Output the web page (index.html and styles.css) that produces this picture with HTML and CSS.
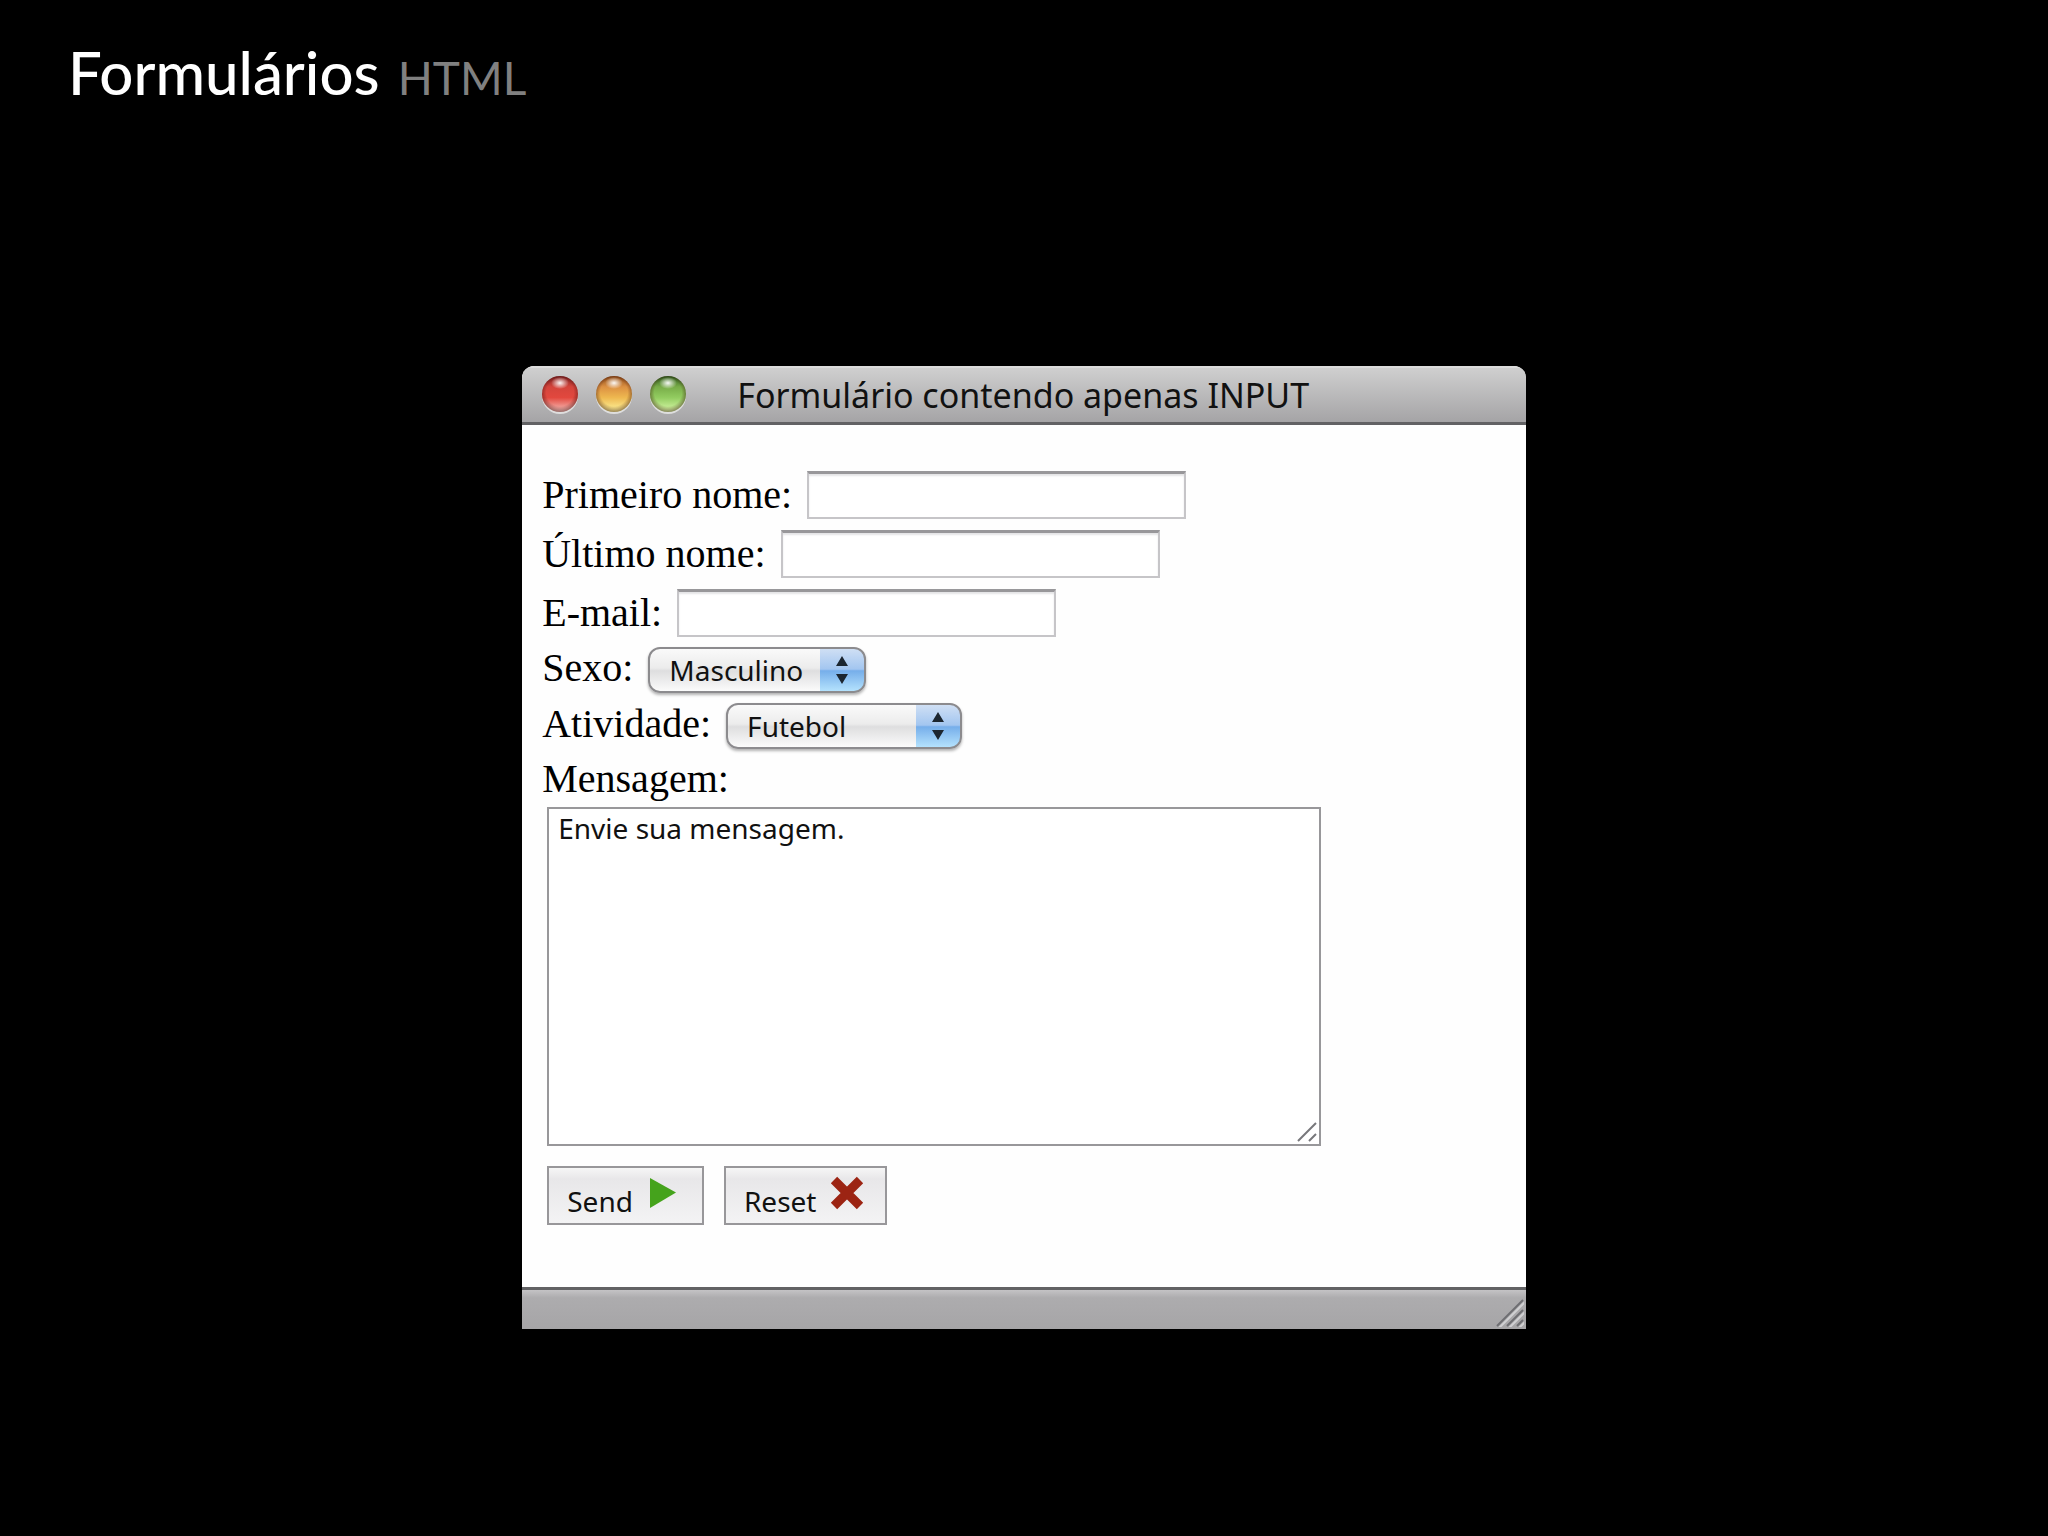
FILE: index.html
```
<!DOCTYPE html>
<html lang="pt-BR">

<head>
  <meta charset="UTF-8">
  <meta name="viewport" content="width=device-width, initial-scale=1.0">
  <title>Formulários HTML</title>
  <link rel="stylesheet" href="styles.css">
</head>

<body>
  <header class="slide-header">
    <h1>Formulários <span class="topic">HTML</span></h1>
  </header>

  <main class="window">
    <div class="titlebar">
      <div class="lights">
        <svg class="light" viewBox="0 0 38 40" aria-hidden="true">
          <defs>
            <linearGradient id="red" x1="0" y1="0" x2="0" y2="1">
              <stop offset="0" stop-color="#7d2020" />
              <stop offset=".3" stop-color="#d4443c" />
              <stop offset=".6" stop-color="#e2483e" />
              <stop offset="1" stop-color="#f8c8c2" />
            </linearGradient>
            <linearGradient id="yellow" x1="0" y1="0" x2="0" y2="1">
              <stop offset="0" stop-color="#8c4a18" />
              <stop offset=".3" stop-color="#dc9042" />
              <stop offset=".6" stop-color="#eeb850" />
              <stop offset="1" stop-color="#fff8a0" />
            </linearGradient>
            <linearGradient id="green" x1="0" y1="0" x2="0" y2="1">
              <stop offset="0" stop-color="#2f5a1c" />
              <stop offset=".3" stop-color="#78ac48" />
              <stop offset=".6" stop-color="#92cc60" />
              <stop offset="1" stop-color="#dcfbac" />
            </linearGradient>
            <radialGradient id="rim" cy=".46" r=".54">
              <stop offset=".7" stop-color="#300" stop-opacity="0" />
              <stop offset="1" stop-color="#200" stop-opacity=".45" />
            </radialGradient>
            <radialGradient id="shine">
              <stop offset="0" stop-color="#fff" stop-opacity=".95" />
              <stop offset="1" stop-color="#fff" stop-opacity="0" />
            </radialGradient>
          </defs>
          <circle cx="19" cy="21" r="18" fill="#dedede" />
          <circle cx="19" cy="19" r="18" fill="url(#red)" />
          <circle cx="19" cy="19" r="18" fill="url(#rim)" />
          <ellipse cx="19" cy="8" rx="9" ry="6" fill="url(#shine)" />
        </svg>
        <svg class="light" viewBox="0 0 38 40" aria-hidden="true">
          <circle cx="19" cy="21" r="18" fill="#dedede" />
          <circle cx="19" cy="19" r="18" fill="url(#yellow)" />
          <circle cx="19" cy="19" r="18" fill="url(#rim)" />
          <ellipse cx="19" cy="8" rx="9" ry="6" fill="url(#shine)" />
        </svg>
        <svg class="light" viewBox="0 0 38 40" aria-hidden="true">
          <circle cx="19" cy="21" r="18" fill="#dedede" />
          <circle cx="19" cy="19" r="18" fill="url(#green)" />
          <circle cx="19" cy="19" r="18" fill="url(#rim)" />
          <ellipse cx="19" cy="8" rx="9" ry="6" fill="url(#shine)" />
        </svg>
      </div>
      <h2>Formulário contendo apenas INPUT</h2>
    </div>

    <form class="form">
      <div class="row">
        <label for="nome">Primeiro nome:</label>
        <input type="text" id="nome" name="nome">
      </div>
      <div class="row">
        <label for="sobrenome">Último nome:</label>
        <input type="text" id="sobrenome" name="sobrenome">
      </div>
      <div class="row">
        <label for="email">E-mail:</label>
        <input type="email" id="email" name="email">
      </div>
      <div class="row row-select">
        <label for="sexo">Sexo:</label>
        <div class="select">
          <select id="sexo" name="sexo">
            <option>Masculino</option>
            <option>Feminino</option>
          </select>
          <svg class="arrows" viewBox="0 0 12 28" aria-hidden="true">
            <path d="M6 0l6 10H0zM6 28L0 18h12z" fill="#1c2630" />
          </svg>
        </div>
      </div>
      <div class="row row-select">
        <label for="atividade">Atividade:</label>
        <div class="select select-wide">
          <select id="atividade" name="atividade">
            <option>Futebol</option>
            <option>Natação</option>
            <option>Voleibol</option>
          </select>
          <svg class="arrows" viewBox="0 0 12 28" aria-hidden="true">
            <path d="M6 0l6 10H0zM6 28L0 18h12z" fill="#1c2630" />
          </svg>
        </div>
      </div>
      <label class="message-label" for="mensagem">Mensagem:</label>
      <div class="message">
        <textarea id="mensagem" name="mensagem">Envie sua mensagem.</textarea>
        <svg class="grip" viewBox="0 0 20 20" aria-hidden="true">
          <path d="M1 19L19 1M12 19l7-7" stroke="#77777b" stroke-width="2" />
        </svg>
      </div>
      <div class="buttons">
        <button type="submit">Send
          <svg viewBox="0 0 38 44" aria-hidden="true">
            <path d="M4 2l26 14.500L4 32z" fill="#45a31c" />
          </svg>
        </button>
        <button type="reset">Reset
          <svg viewBox="0 0 38 44" aria-hidden="true">
            <path d="M5 4l26 26M31 4L5 30" stroke="#9c2413" stroke-width="9" />
          </svg>
        </button>
      </div>
    </form>

    <div class="statusbar">
      <svg viewBox="0 0 28 28" aria-hidden="true">
        <path d="M3 29L29 3M13 29l16-16M23 29l6-6" stroke="#d0d0d2" stroke-width="2" />
        <path d="M1 27L27 1M11 27l16-16M21 27l6-6" stroke="#6e6e72" stroke-width="2" />
      </svg>
    </div>
  </main>
</body>

</html>
```
FILE: styles.css
```
* {
  box-sizing: border-box;
}

body {
  margin: 0;
  background: #000;
  font-family: "Noto Sans", sans-serif;
}

.slide-header {
  padding: 32px 68px 0;
}

h1 {
  display: flex;
  align-items: flex-end;
  gap: 18px;
  margin: 0;
  color: #fff;
  font-family: Lato, sans-serif;
  font-size: 60px;
  font-weight: 500;
  line-height: 80px;
}

.topic {
  color: #808080;
  font-size: 46px;
  font-weight: 400;
  line-height: 68px;
}

.window {
  width: 49%;
  min-width: 840px;
  margin: 254px auto 64px;
  border-radius: 12px 12px 0 0;
  background: #fefefe;
  overflow: hidden;
}

.titlebar {
  display: flex;
  align-items: center;
  gap: 50px;
  height: 59px;
  padding: 0 19px;
  border-top: 2px solid #dcdcdc;
  border-bottom: 3px solid #626264;
  background: linear-gradient(#cfcfcf, #a5a4a6);
}

.titlebar h2 {
  margin: 0;
  color: #111;
  font-size: 34px;
  font-weight: 400;
  line-height: 48px;
}

.lights {
  display: flex;
  gap: 16px;
}

.light {
  width: 38px;
  height: 40px;
}

.form {
  padding: 40px 20px 62px;
}

.row {
  display: flex;
  align-items: center;
  gap: 15px;
  height: 59px;
}

.row-select {
  align-items: baseline;
  height: 56px;
  padding-top: 3px;
}

label {
  font-family: "Liberation Serif", serif;
  font-size: 40px;
  line-height: 46px;
}

.row input {
  width: 379px;
  height: 48px;
  padding: 0 8px;
  border: 2px solid #c6c5c8;
  border-top: 3px solid #98979a;
  background: #fff;
  font: 28px "Noto Sans", sans-serif;
  box-shadow: inset 0 2px 2px #e4e4e6;
}

.select {
  position: relative;
  width: 218px;
}

.select-wide {
  width: 236px;
}

select {
  appearance: none;
  display: block;
  width: 100%;
  height: 46px;
  padding: 0 46px 0 19px;
  border: 2px solid #8c8b8e;
  border-radius: 12px;
  background:
    linear-gradient(#cfdff4, #a3c6f0 48%, #76aeea 52%, #b4e2fd) right / 44px 100% no-repeat,
    linear-gradient(#fafafa, #ececec 45%, #dededf 52%, #fbfbfb);
  color: #111;
  font: 28px "Noto Sans", sans-serif;
  box-shadow: 0 2px 3px rgba(0, 0, 0, 0.3);
}

.arrows {
  position: absolute;
  top: 9px;
  right: 18px;
  width: 12px;
  height: 28px;
  pointer-events: none;
}

.message-label {
  display: block;
  padding-top: 2px;
}

.message {
  position: relative;
  width: 774px;
  margin: 5px 0 20px 5px;
}

textarea {
  display: block;
  width: 100%;
  height: 339px;
  padding: 0 9px;
  border: 2px solid #98979a;
  background: #fff;
  color: #111;
  font: 28px/38px "Noto Sans", sans-serif;
  resize: none;
}

.grip {
  position: absolute;
  right: 4px;
  bottom: 4px;
  width: 20px;
  height: 20px;
  pointer-events: none;
}

.buttons {
  display: flex;
  gap: 20px;
  margin-left: 5px;
}

button {
  display: flex;
  align-items: flex-end;
  gap: 13px;
  padding: 8px 18px 3px;
  border: 2px solid #98979a;
  background: linear-gradient(#f6f6f6, #e8e7e9 20%, #f3f3f4);
  color: #111;
  font: 28px/38px "Noto Sans", sans-serif;
}

button svg {
  width: 38px;
  height: 44px;
}

.statusbar {
  display: flex;
  justify-content: flex-end;
  align-items: flex-end;
  height: 42px;
  padding: 0 2px 2px;
  border-top: 3px solid #626264;
  background: linear-gradient(#c4c3c5, #adacae 20%, #a6a5a7);
}

.statusbar svg {
  width: 28px;
  height: 28px;
}
```
